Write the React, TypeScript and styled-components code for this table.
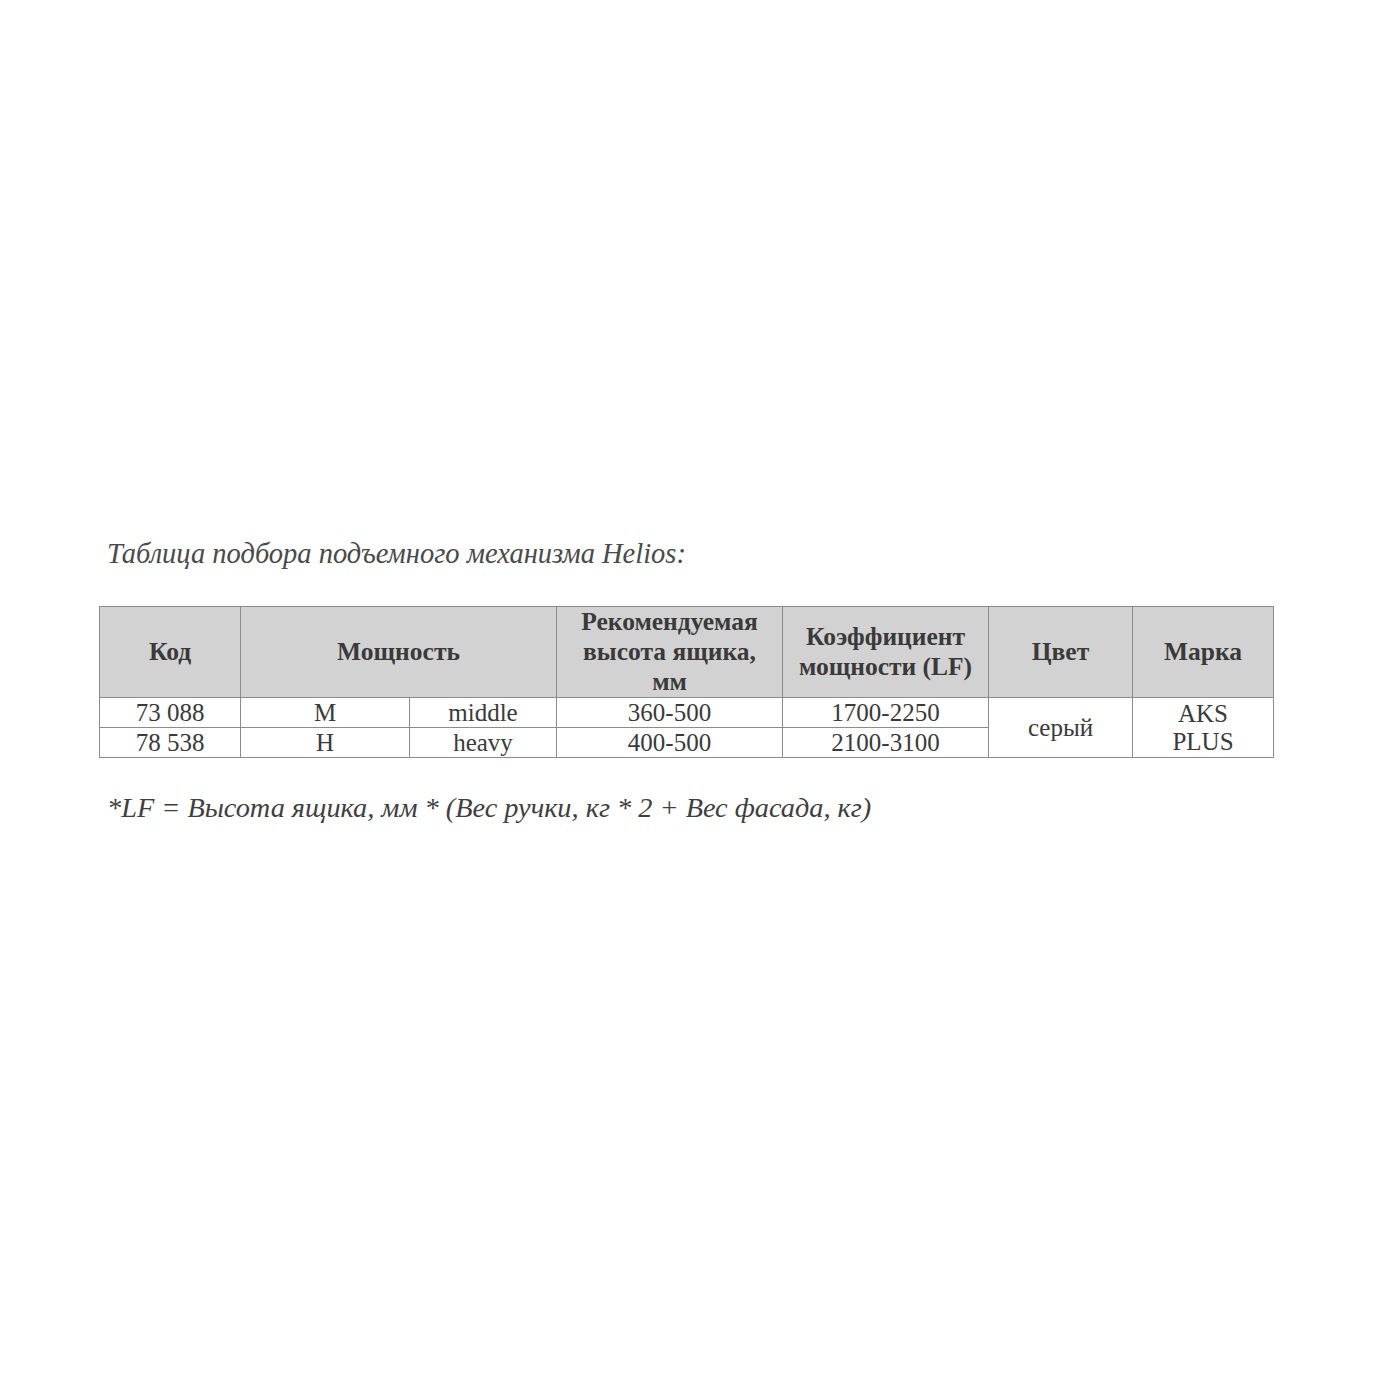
import React from "react";
import styled, { createGlobalStyle } from "styled-components";

const Global = createGlobalStyle`
  html, body { margin: 0; padding: 0; background: #ffffff; }
  body { width: 1400px; height: 1400px; }
`;

const Page = styled.div`
  width: 1400px;
  height: 1400px;
  box-sizing: border-box;
  padding: 535px 0 0 99px;
  display: flex;
  flex-direction: column;
  align-items: flex-start;
`;

const Caption = styled.p`
  margin: 0 0 0 8px;
  font-family: "Liberation Serif", serif;
  font-style: italic;
  font-size: 28.5px;
  line-height: 38px;
  color: #4a4a4a;
`;

const Table = styled.table`
  margin-top: 33px;
  border-collapse: collapse;
  table-layout: fixed;
  width: 1174px;
  font-family: "Liberation Serif", serif;
  color: #3a3a3a;
`;

const HeadCell = styled.th`
  background: #d3d2d3;
  border: 1.5px solid #8c8c8c;
  height: 88px;
  padding: 0 2px;
  font-size: 25.5px;
  font-weight: bold;
  line-height: 30px;
  text-align: center;
  vertical-align: middle;
  color: #3a3a3a;
`;

const Cell = styled.td`
  border: 1.5px solid #8c8c8c;
  height: 29px;
  padding: 0 4px;
  font-size: 25px;
  line-height: 28px;
  text-align: center;
  vertical-align: middle;
`;

const Note = styled.p`
  margin: 33px 0 0 8px;
  font-family: "Liberation Serif", serif;
  font-style: italic;
  font-size: 28.3px;
  line-height: 34px;
  color: #3f3f3f;
`;

const widths = [141, 169, 147, 226, 206, 144, 141];

export default function App() {
  return (
    <>
      <Global />
      <Page>
        <Caption>Таблица подбора подъемного механизма Helios:</Caption>
        <Table>
          <colgroup>
            {widths.map((w, i) => (
              <col key={i} style={{ width: w }} />
            ))}
          </colgroup>
          <thead>
            <tr>
              <HeadCell>Код</HeadCell>
              <HeadCell colSpan={2}>Мощность</HeadCell>
              <HeadCell>
                Рекомендуемая
                <br />
                высота ящика,
                <br />
                мм
              </HeadCell>
              <HeadCell>
                Коэффициент
                <br />
                мощности (LF)
              </HeadCell>
              <HeadCell>Цвет</HeadCell>
              <HeadCell>Марка</HeadCell>
            </tr>
          </thead>
          <tbody>
            <tr>
              <Cell>73 088</Cell>
              <Cell>M</Cell>
              <Cell>middle</Cell>
              <Cell>360-500</Cell>
              <Cell>1700-2250</Cell>
              <Cell rowSpan={2}>серый</Cell>
              <Cell rowSpan={2}>
                AKS
                <br />
                PLUS
              </Cell>
            </tr>
            <tr>
              <Cell>78 538</Cell>
              <Cell>H</Cell>
              <Cell>heavy</Cell>
              <Cell>400-500</Cell>
              <Cell>2100-3100</Cell>
            </tr>
          </tbody>
        </Table>
        <Note>*LF = Высота ящика, мм * (Вес ручки, кг * 2 + Вес фасада, кг)</Note>
      </Page>
    </>
  );
}
